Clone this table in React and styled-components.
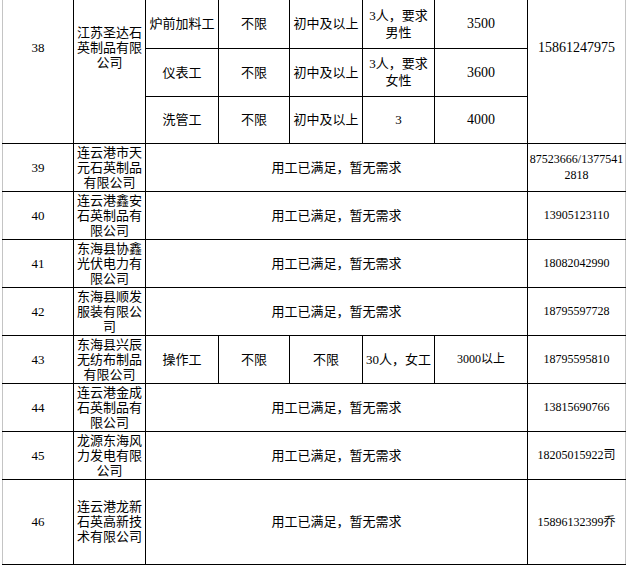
import styled, { createGlobalStyle, css } from "styled-components";

const GlobalStyle = createGlobalStyle`
  html, body {
    margin: 0;
    padding: 0;
    background: #fff;
  }
  body {
    font-family: "Liberation Serif", "Noto Sans CJK SC", serif;
    color: #000;
    overflow: hidden;
  }
`;

const Sheet = styled.table`
  margin-left: 2px;
  border-collapse: collapse;
  table-layout: fixed;
  width: 623px;
`;

const Col = styled.col`
  width: ${(p) => p.$w}px;
`;

const Row = styled.tr`
  height: ${(p) => p.$h || 48}px;
  &:first-child > td {
    border-top: none;
  }
`;

const Cell = styled.td`
  border: 1px solid #000;
  padding: 0;
  text-align: center;
  vertical-align: middle;
  font-size: 13px;
  line-height: 15px;
  white-space: pre-line;
  overflow: hidden;
  ${(p) =>
    p.$lift &&
    css`
      padding-bottom: 47px;
    `}
`;

const NoCell = styled(Cell)`
  border-left-color: #c4c4c4;
  font-size: 13px;
  ${(p) =>
    p.$marked &&
    css`
      box-shadow: -2px 0 0 #3dab4a;
    `}
`;

const NameCell = styled(Cell)`
  line-height: 15px;
`;

const JobCell = styled(Cell)`
  font-size: ${(p) => p.$size || 13}px;
  line-height: 17px;
`;

const NoteCell = styled(Cell)`
  font-size: 13px;
`;

const PhoneCell = styled(Cell)`
  border-right-color: #c4c4c4;
  font-size: ${(p) => p.$size || 12}px;
  line-height: 16px;
  word-break: break-all;
`;

const NOTE = "用工已满足，暂无需求";

// column widths, line to line
const COLS = [71, 72, 73, 71, 73, 72, 93, 98];

const rows = [
  {
    no: 38,
    company: "江苏圣达石英制品有限公司",
    phone: "15861247975",
    phoneSize: 14,
    lift: true,
    jobs: [
      { post: "炉前加料工", age: "不限", edu: "初中及以上", count: "3人，要求\n男性", pay: "3500" },
      { post: "仪表工", age: "不限", edu: "初中及以上", count: "3人，要求\n女性", pay: "3600" },
      { post: "洗管工", age: "不限", edu: "初中及以上", count: "3", pay: "4000", h: 47 },
    ],
  },
  { no: 39, company: "连云港市天元石英制品有限公司", phone: "87523666/13775412818" },
  { no: 40, company: "连云港鑫安石英制品有限公司", phone: "13905123110" },
  { no: 41, company: "东海县协鑫光伏电力有限公司", phone: "18082042990" },
  { no: 42, company: "东海县顺发服装有限公司", phone: "18795597728" },
  {
    no: 43,
    company: "东海县兴辰无纺布制品有限公司",
    phone: "18795595810",
    jobs: [{ post: "操作工", age: "不限", edu: "不限", count: "30人，女工", pay: "3000以上", paySize: 12 }],
  },
  { no: 44, company: "连云港金成石英制品有限公司", phone: "13815690766", marked: true },
  { no: 45, company: "龙源东海风力发电有限公司", phone: "18205015922司" },
  { no: 46, company: "连云港龙新石英高新技术有限公司", phone: "15896132399乔", h: 85 },
];

const JobFields = ({ job }) => (
  <>
    <JobCell>{job.post}</JobCell>
    <JobCell>{job.age}</JobCell>
    <JobCell>{job.edu}</JobCell>
    <JobCell>{job.count}</JobCell>
    <JobCell $size={job.paySize || 14}>{job.pay}</JobCell>
  </>
);

const Company = ({ item }) => {
  const jobs = item.jobs || [];
  const span = Math.max(jobs.length, 1);
  const head = (
    <>
      <NoCell rowSpan={span} $lift={item.lift} $marked={item.marked}>
        {item.no}
      </NoCell>
      <NameCell rowSpan={span} $lift={item.lift}>
        {item.company}
      </NameCell>
    </>
  );
  const phone = (
    <PhoneCell rowSpan={span} $lift={item.lift} $size={item.phoneSize}>
      {item.phone}
    </PhoneCell>
  );

  if (jobs.length === 0) {
    return (
      <Row $h={item.h}>
        {head}
        <NoteCell colSpan={5}>{NOTE}</NoteCell>
        {phone}
      </Row>
    );
  }

  return jobs.map((job, i) => (
    <Row key={i} $h={job.h || item.h}>
      {i === 0 && head}
      <JobFields job={job} />
      {i === 0 && phone}
    </Row>
  ));
};

export default function App() {
  return (
    <>
      <GlobalStyle />
      <Sheet>
        <colgroup>
          {COLS.map((w, i) => (
            <Col key={i} $w={w} />
          ))}
        </colgroup>
        <tbody>
          {rows.map((item) => (
            <Company key={item.no} item={item} />
          ))}
        </tbody>
      </Sheet>
    </>
  );
}
